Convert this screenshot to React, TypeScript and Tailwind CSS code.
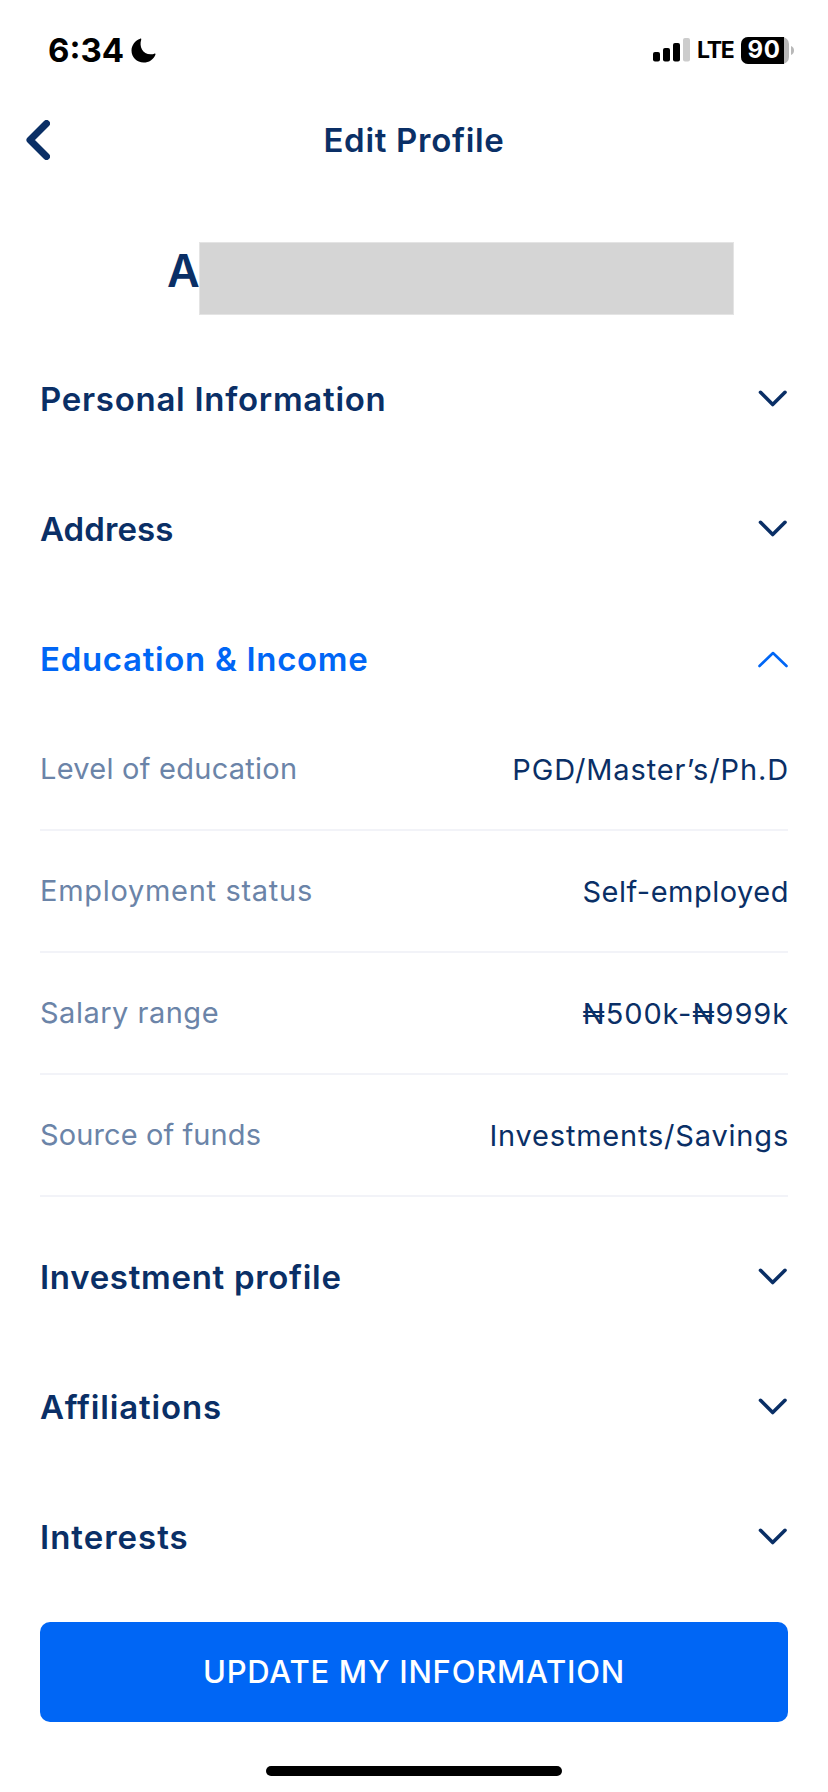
import React from 'react';

type Row = {
  label: string;
  value: string;
  labelSpacing?: string;
  valueSpacing?: string;
};

type Section = {
  title: string;
  spacing?: string;
  rows?: Row[];
};

const sections: Section[] = [
  { title: 'Personal Information', spacing: 'tracking-[0.72px]' },
  { title: 'Address', spacing: 'tracking-[0.1px]' },
  {
    title: 'Education & Income',
    spacing: 'tracking-[0.68px]',
    rows: [
      {
        label: 'Level of education',
        value: 'PGD/Master’s/Ph.D',
        labelSpacing: 'tracking-[0.25px]',
        valueSpacing: 'tracking-[0.88px]',
      },
      {
        label: 'Employment status',
        value: 'Self-employed',
        labelSpacing: 'tracking-[0.7px]',
        valueSpacing: 'tracking-[0.5px]',
      },
      {
        label: 'Salary range',
        value: '₦500k-₦999k',
        labelSpacing: 'tracking-[0.5px]',
        valueSpacing: 'tracking-[0.9px]',
      },
      {
        label: 'Source of funds',
        value: 'Investments/Savings',
        labelSpacing: 'tracking-[0.1px]',
        valueSpacing: 'tracking-[0.8px]',
      },
    ],
  },
  { title: 'Investment profile', spacing: 'tracking-[0.7px]' },
  { title: 'Affiliations', spacing: 'tracking-[0.85px]' },
  { title: 'Interests', spacing: 'tracking-[1px]' },
];

/**
 * Phone status bar with the time, signal and battery level.
 */
const StatusBar: React.FC = () => {
  return (
    <div className="flex h-[100px] items-center justify-between pl-12 pr-[34px] text-black">
      <div className="flex items-center gap-[7px]">
        <span className="text-[33px] font-bold leading-none">6:34</span>
        <svg width="25" height="25" viewBox="0 0 25 25" fill="currentColor">
          <path d="M9.2.7c.7-.3 1.300.3 1 1C8 8.500 11.500 16.500 20 16.300c1.300 0 2.400-.3 3.300-.6.800-.3 1.400.3 1.100 1C22.500 21.500 18 24.600 12.600 24.600 5.800 24.600.5 19.300.5 12.600.5 7 4.200 2.500 9.200.7z" />
        </svg>
      </div>
      <div className="flex items-center">
        <svg width="38" height="24" viewBox="0 0 38 24" fill="currentColor">
          <rect x="0" y="14" width="7" height="9.500" rx="2" />
          <rect x="10" y="10" width="7" height="13.500" rx="2" />
          <rect x="20" y="5" width="7" height="18.500" rx="2" />
          <rect x="30" y="0" width="7" height="23.500" rx="2" fill="#cccccc" />
        </svg>
        <span className="ml-[6px] w-[36px] pt-px text-[23px] font-bold leading-none tracking-[-1.2px]">
          LTE
        </span>
        <div className="ml-[8px] flex h-[27px] w-12 items-center rounded-[7px] bg-[#b8b8b8]">
          <span className="flex h-full w-[43px] items-center justify-center rounded-l-[7px] bg-black pl-[3px] text-[24px] font-bold leading-none tracking-[0.5px] text-white">
            90
          </span>
        </div>
        <svg className="ml-[2px]" width="3" height="9" viewBox="0 0 3 9">
          <path d="M0 0c4 1.500 4 7.500 0 9z" fill="#b8b8b8" />
        </svg>
      </div>
    </div>
  );
};

const Chevron: React.FC<{ open: boolean }> = ({ open }) => {
  return open ? (
    <svg width="30" height="17" viewBox="0 0 30 17" fill="none" stroke="#0066f5">
      <path d="M1.500 15 15 2 28.500 15" strokeWidth="2.600" strokeLinecap="round" strokeLinejoin="round" />
    </svg>
  ) : (
    <svg width="30" height="18" viewBox="0 0 30 18" fill="none" stroke="#0a2f66">
      <path d="M2.500 2.300 14.700 14.500 27 2.300" strokeWidth="3.600" strokeLinecap="round" strokeLinejoin="round" />
    </svg>
  );
};

const ProfileSection: React.FC<{ section: Section }> = ({ section }) => {
  const open = !!section.rows;

  return (
    <section>
      <button
        className={
          open
            ? 'flex h-[130px] w-full items-center justify-between text-[#0066f5]'
            : 'flex h-[130px] w-full items-center justify-between text-[#0a2f66]'
        }
      >
        <span className={`text-[33px] font-semibold leading-none ${section.spacing ?? ''}`}>
          {section.title}
        </span>
        <Chevron open={open} />
      </button>
      {section.rows && (
        <div className="-mt-[15px] mb-[15px]">
          {section.rows.map((row) => (
            <div
              key={row.label}
              className="flex h-[122px] items-center justify-between border-b-2 border-[#f2f3f8] text-[29px] leading-none"
            >
              <span className={`pb-[2px] text-[#6b84a8] ${row.labelSpacing ?? ''}`}>{row.label}</span>
              <span className={`-mr-px text-[#0a2f66] ${row.valueSpacing ?? ''}`}>{row.value}</span>
            </div>
          ))}
        </div>
      )}
    </section>
  );
};

const App: React.FC = () => {
  return (
    <div className="flex h-[1792px] w-[828px] flex-col overflow-hidden bg-white font-['Inter','Noto_Sans',sans-serif]">
      <StatusBar />
      <header className="grid h-20 grid-cols-[1fr_auto_1fr] items-center px-[26px]">
        <svg width="24" height="40" viewBox="0 0 24 40" fill="none" stroke="#0a2f66">
          <path d="M20.500 3.500 4 20l16.500 16.500" strokeWidth="7" strokeLinecap="round" strokeLinejoin="round" />
        </svg>
        <h1 className="text-[33px] font-semibold leading-none tracking-[0.7px] text-[#0a2f66]">
          Edit Profile
        </h1>
      </header>
      <div className="mt-[62px] flex h-[73px] pl-[167px]">
        <span className="w-[32px] pt-[6px] text-[45px] font-semibold leading-none text-[#0a2f66]">A</span>
        <span className="h-full w-[535px] border border-[#e4e4e4] bg-[#d5d5d5]" />
      </div>
      <main className="mt-[19px] px-10">
        {sections.map((section) => (
          <ProfileSection key={section.title} section={section} />
        ))}
      </main>
      <footer className="mt-5 flex flex-col items-center px-10">
        <button className="h-[100px] w-full rounded-[10px] bg-[#0066f5] pb-[2px] text-[31px] font-medium leading-none tracking-[0.75px] text-white">
          UPDATE MY INFORMATION
        </button>
        <div className="mt-11 h-[10px] w-[296px] rounded-full bg-black" />
      </footer>
    </div>
  );
};

export default App;
